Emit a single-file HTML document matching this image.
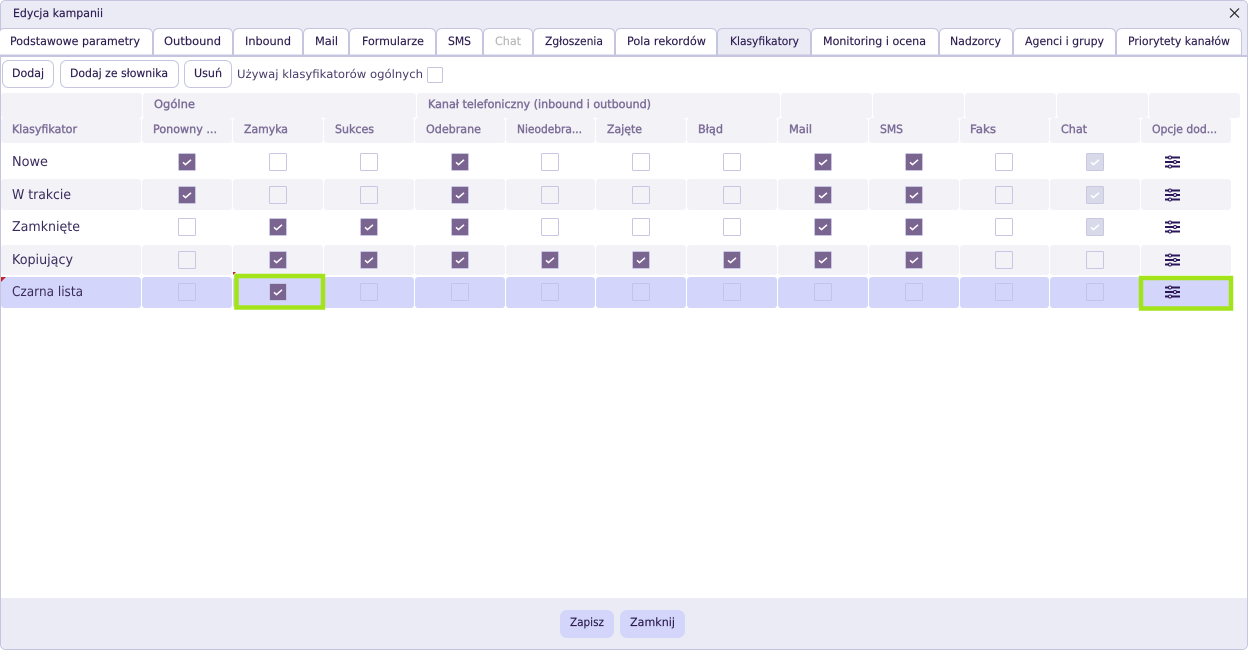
<!DOCTYPE html>
<html lang="pl">
<head>
<meta charset="utf-8">
<title>Edycja kampanii</title>
<style>
html,body{margin:0;padding:0;background:#fff;width:1250px;height:650px;overflow:hidden}
svg{display:block}
text{font-family:"DejaVu Sans","Liberation Sans",sans-serif;white-space:pre}
.t{font-size:11.5px;fill:#2a1a4e;stroke:#2a1a4e;stroke-width:.15}
.h{font-size:11.5px;fill:#7c6c97;stroke:#7c6c97;stroke-width:.4}
.l{font-size:13.5px;fill:#3a2a5c}
.cell{fill:#f2f2f7}
.blue{fill:#d3d6fa}
</style>
</head>
<body>
<svg width="1250" height="650" viewBox="0 0 1250 650" xmlns="http://www.w3.org/2000/svg" text-rendering="geometricPrecision">
<defs>
<g id="x"><rect x="-8.5" y="-8.5" width="17" height="17" rx="1" fill="#7a6490" stroke="#c8c6e2"/><path d="M-4 .3L-1.500 2.600L4 -2.200" fill="none" stroke="#fff" stroke-width="1.500"/></g>
<g id="o"><rect x="-8.5" y="-8.5" width="17" height="17" rx="1" fill="#fff" stroke="#c8c6e2"/></g>
<g id="f"><rect x="-8.5" y="-8.5" width="17" height="17" rx="1" fill="none" stroke="#c8c6e2"/></g>
<g id="b"><rect x="-8.5" y="-8.5" width="17" height="17" rx="1" fill="none" stroke="#c3c5e4"/></g>
<g id="d"><rect x="-8.5" y="-8.5" width="17" height="17" rx="1" fill="#d9dae9" stroke="#c8c9e0"/><path d="M-4 .3L-1.500 2.600L4 -2.200" fill="none" stroke="#fff" stroke-width="1.500"/></g>
<g id="i" fill="none" stroke="#2a1658">
<path d="M-7.500 -4.500H7.500M-7.500 0H7.500M-7.500 4.500H7.500" stroke-width="1.900"/>
<circle cx="-2.500" cy="-4.500" r="1.500" fill="#fff" stroke-width="1.100"/>
<circle cx="2.500" cy="0" r="1.500" fill="#fff" stroke-width="1.100"/>
<circle cx="-2.500" cy="4.500" r="1.500" fill="#fff" stroke-width="1.100"/>
</g>
</defs>

<!-- window -->
<rect x=".5" y=".5" width="1247" height="649" rx="5" fill="#fff" stroke="#c5c5e0"/>
<path d="M1 56V6Q1 1 6 1H1242Q1247 1 1247 6V56Z" fill="#ebebf6"/>
<rect x="0" y="55" width="1248" height="2" fill="#c5c5e0"/>
<path d="M1 598H1247V644Q1247 649 1242 649H6Q1 649 1 644Z" fill="#ebebf6"/>
<text x="13" y="17" class="t" textLength="90" lengthAdjust="spacingAndGlyphs">Edycja kampanii</text>
<path d="M1230 8.500L1239 17.500M1239 8.500L1230 17.500" stroke="#222" stroke-width="1.200" fill="none"/>

<!-- tabs -->
<g fill="#fff" stroke="#c5c5e0">
<path d="M-1 55V34Q-1 28.500 5 28.500H146Q152.500 28.500 152.500 34V55Z"/>
<path d="M153.500 55V34Q153.500 28.500 159 28.500H227Q232.500 28.500 232.500 34V55Z"/>
<path d="M233.500 55V34Q233.500 28.500 239 28.500H297Q302.500 28.500 302.500 34V55Z"/>
<path d="M303.500 55V34Q303.500 28.500 309 28.500H343Q348.500 28.500 348.500 34V55Z"/>
<path d="M349.500 55V34Q349.500 28.500 355 28.500H430Q435.500 28.500 435.500 34V55Z"/>
<path d="M436.500 55V34Q436.500 28.500 442 28.500H477Q482.500 28.500 482.500 34V55Z"/>
<path d="M483.500 55V34Q483.500 28.500 489 28.500H527Q532.500 28.500 532.500 34V55Z"/>
<path d="M533.500 55V34Q533.500 28.500 539 28.500H609Q614.500 28.500 614.500 34V55Z"/>
<path d="M615.500 55V34Q615.500 28.500 621 28.500H711Q716.500 28.500 716.500 34V55Z"/>
<path d="M717.500 55V34Q717.500 28.500 723 28.500H805Q810.500 28.500 810.500 34V55Z" fill="#ebebf6"/>
<path d="M811.500 55V34Q811.500 28.500 817 28.500H933Q938.500 28.500 938.500 34V55Z"/>
<path d="M939.500 55V34Q939.500 28.500 945 28.500H1007Q1012.500 28.500 1012.500 34V55Z"/>
<path d="M1013.500 55V34Q1013.500 28.500 1019 28.500H1110Q1115.500 28.500 1115.500 34V55Z"/>
<path d="M1116.500 55V34Q1116.500 28.500 1122 28.500H1236Q1241.500 28.500 1241.500 34V55Z"/>
</g>
<text x="10" y="45" class="t" textLength="130" lengthAdjust="spacingAndGlyphs">Podstawowe parametry</text>
<text x="164" y="45" class="t" textLength="57" lengthAdjust="spacingAndGlyphs">Outbound</text>
<text x="245" y="45" class="t" textLength="46" lengthAdjust="spacingAndGlyphs">Inbound</text>
<text x="315" y="45" class="t" textLength="23" lengthAdjust="spacingAndGlyphs">Mail</text>
<text x="362" y="45" class="t" textLength="62" lengthAdjust="spacingAndGlyphs">Formularze</text>
<text x="448" y="45" class="t" textLength="23" lengthAdjust="spacingAndGlyphs">SMS</text>
<text x="495" y="45" class="t" style="fill:#b5b5b5;stroke:#b5b5b5" textLength="26" lengthAdjust="spacingAndGlyphs">Chat</text>
<text x="545" y="45" class="t" textLength="58" lengthAdjust="spacingAndGlyphs">Zgłoszenia</text>
<text x="627" y="45" class="t" textLength="79" lengthAdjust="spacingAndGlyphs">Pola rekordów</text>
<text x="730" y="45" class="t" textLength="69" lengthAdjust="spacingAndGlyphs">Klasyfikatory</text>
<text x="823" y="45" class="t" textLength="103" lengthAdjust="spacingAndGlyphs">Monitoring i ocena</text>
<text x="950" y="45" class="t" textLength="51" lengthAdjust="spacingAndGlyphs">Nadzorcy</text>
<text x="1025" y="45" class="t" textLength="79" lengthAdjust="spacingAndGlyphs">Agenci i grupy</text>
<text x="1128" y="45" class="t" textLength="102" lengthAdjust="spacingAndGlyphs">Priorytety kanałów</text>

<!-- toolbar -->
<g fill="#fff" stroke="#c5c5e0">
<rect x="2.500" y="60.500" width="51" height="27" rx="6"/>
<rect x="60.500" y="60.500" width="118" height="27" rx="6"/>
<rect x="184.500" y="60.500" width="47" height="27" rx="6"/>
<rect x="427.500" y="67.500" width="15" height="15" rx="1.500"/>
</g>
<text x="12" y="77" class="t" textLength="32" lengthAdjust="spacingAndGlyphs">Dodaj</text>
<text x="70" y="77" class="t" textLength="98" lengthAdjust="spacingAndGlyphs">Dodaj ze słownika</text>
<text x="194" y="77" class="t" textLength="28" lengthAdjust="spacingAndGlyphs">Usuń</text>
<text x="237" y="78" class="t" style="fill:#4a3b68;stroke:none" textLength="186" lengthAdjust="spacingAndGlyphs">Używaj klasyfikatorów ogólnych</text>

<!-- table header group row -->
<g class="cell">
<rect x="1" y="93" width="141" height="25" rx="3"/>
<rect x="143" y="93" width="273" height="25" rx="3"/>
<rect x="417" y="93" width="363" height="25" rx="3"/>
<rect x="781" y="93" width="91" height="25" rx="3"/>
<rect x="873" y="93" width="91" height="25" rx="3"/>
<rect x="965" y="93" width="91" height="25" rx="3"/>
<rect x="1057" y="93" width="91" height="25" rx="3"/>
<rect x="1149" y="93" width="91" height="25" rx="3"/>
</g>
<!-- table header row -->
<g class="cell">
<rect x="1" y="118" width="140" height="25" rx="3"/>
<rect x="142" y="118" width="90" height="25" rx="3"/>
<rect x="233" y="118" width="90" height="25" rx="3"/>
<rect x="324" y="118" width="90" height="25" rx="3"/>
<rect x="415" y="118" width="90" height="25" rx="3"/>
<rect x="506" y="118" width="89" height="25" rx="3"/>
<rect x="596" y="118" width="90" height="25" rx="3"/>
<rect x="687" y="118" width="90" height="25" rx="3"/>
<rect x="778" y="118" width="90" height="25" rx="3"/>
<rect x="869" y="118" width="90" height="25" rx="3"/>
<rect x="960" y="118" width="89" height="25" rx="3"/>
<rect x="1050" y="118" width="90" height="25" rx="3"/>
<rect x="1141" y="118" width="90" height="25" rx="3"/>
</g>
<text x="154" y="108" class="h" textLength="41" lengthAdjust="spacingAndGlyphs">Ogólne</text>
<text x="428" y="108" class="h" textLength="223" lengthAdjust="spacingAndGlyphs">Kanał telefoniczny (inbound i outbound)</text>
<text x="12" y="133" class="h" textLength="65" lengthAdjust="spacingAndGlyphs">Klasyfikator</text>
<text x="153" y="133" class="h" textLength="64" lengthAdjust="spacingAndGlyphs">Ponowny ...</text>
<text x="244" y="133" class="h" textLength="44" lengthAdjust="spacingAndGlyphs">Zamyka</text>
<text x="335" y="133" class="h" textLength="39" lengthAdjust="spacingAndGlyphs">Sukces</text>
<text x="426" y="133" class="h" textLength="55" lengthAdjust="spacingAndGlyphs">Odebrane</text>
<text x="517" y="133" class="h" textLength="65" lengthAdjust="spacingAndGlyphs">Nieodebra...</text>
<text x="607" y="133" class="h" textLength="35" lengthAdjust="spacingAndGlyphs">Zajęte</text>
<text x="698" y="133" class="h" textLength="25" lengthAdjust="spacingAndGlyphs">Błąd</text>
<text x="789" y="133" class="h" textLength="23" lengthAdjust="spacingAndGlyphs">Mail</text>
<text x="880" y="133" class="h" textLength="23" lengthAdjust="spacingAndGlyphs">SMS</text>
<text x="970" y="133" class="h" textLength="26" lengthAdjust="spacingAndGlyphs">Faks</text>
<text x="1061" y="133" class="h" textLength="26" lengthAdjust="spacingAndGlyphs">Chat</text>
<text x="1152" y="133" class="h" textLength="65" lengthAdjust="spacingAndGlyphs">Opcje dod...</text>

<!-- row backgrounds -->
<g class="cell">
<rect x="1" y="179" width="140" height="31" rx="3"/><rect x="142" y="179" width="90" height="31" rx="3"/><rect x="233" y="179" width="90" height="31" rx="3"/><rect x="324" y="179" width="90" height="31" rx="3"/><rect x="415" y="179" width="90" height="31" rx="3"/><rect x="506" y="179" width="89" height="31" rx="3"/><rect x="596" y="179" width="90" height="31" rx="3"/><rect x="687" y="179" width="90" height="31" rx="3"/><rect x="778" y="179" width="90" height="31" rx="3"/><rect x="869" y="179" width="90" height="31" rx="3"/><rect x="960" y="179" width="89" height="31" rx="3"/><rect x="1050" y="179" width="90" height="31" rx="3"/><rect x="1141" y="179" width="90" height="31" rx="3"/>
<rect x="1" y="245" width="140" height="30" rx="3"/><rect x="142" y="245" width="90" height="30" rx="3"/><rect x="233" y="245" width="90" height="30" rx="3"/><rect x="324" y="245" width="90" height="30" rx="3"/><rect x="415" y="245" width="90" height="30" rx="3"/><rect x="506" y="245" width="89" height="30" rx="3"/><rect x="596" y="245" width="90" height="30" rx="3"/><rect x="687" y="245" width="90" height="30" rx="3"/><rect x="778" y="245" width="90" height="30" rx="3"/><rect x="869" y="245" width="90" height="30" rx="3"/><rect x="960" y="245" width="89" height="30" rx="3"/><rect x="1050" y="245" width="90" height="30" rx="3"/><rect x="1141" y="245" width="90" height="30" rx="3"/>
</g>
<g class="blue">
<rect x="1" y="277" width="140" height="31" rx="3"/><rect x="142" y="277" width="90" height="31" rx="3"/><rect x="233" y="277" width="90" height="31" rx="3"/><rect x="324" y="277" width="90" height="31" rx="3"/><rect x="415" y="277" width="90" height="31" rx="3"/><rect x="506" y="277" width="89" height="31" rx="3"/><rect x="596" y="277" width="90" height="31" rx="3"/><rect x="687" y="277" width="90" height="31" rx="3"/><rect x="778" y="277" width="90" height="31" rx="3"/><rect x="869" y="277" width="90" height="31" rx="3"/><rect x="960" y="277" width="89" height="31" rx="3"/><rect x="1050" y="277" width="90" height="31" rx="3"/><rect x="1141" y="277" width="90" height="31" rx="3"/>
</g>
<path d="M1 277H6L1 282Z" fill="#c0222c"/>
<path d="M233 272H236L233 275Z" fill="#c0222c"/>

<!-- row labels -->
<text x="12" y="166" class="l" textLength="36" lengthAdjust="spacingAndGlyphs">Nowe</text>
<text x="12" y="199" class="l" textLength="59" lengthAdjust="spacingAndGlyphs">W trakcie</text>
<text x="12" y="231" class="l" textLength="68" lengthAdjust="spacingAndGlyphs">Zamknięte</text>
<text x="12" y="264" class="l" textLength="61" lengthAdjust="spacingAndGlyphs">Kopiujący</text>
<text x="12" y="296" class="l" textLength="71" lengthAdjust="spacingAndGlyphs">Czarna lista</text>

<!-- row 1 -->
<use href="#x" x="187" y="162"/><use href="#o" x="278" y="162"/><use href="#o" x="369" y="162"/><use href="#x" x="460" y="162"/><use href="#o" x="550" y="162"/><use href="#o" x="641" y="162"/><use href="#o" x="732" y="162"/><use href="#x" x="823" y="162"/><use href="#x" x="914" y="162"/><use href="#o" x="1004" y="162"/><use href="#d" x="1095" y="162"/><use href="#i" x="1172.500" y="162"/>
<!-- row 2 -->
<use href="#x" x="187" y="195"/><use href="#f" x="278" y="195"/><use href="#f" x="369" y="195"/><use href="#x" x="460" y="195"/><use href="#f" x="550" y="195"/><use href="#f" x="641" y="195"/><use href="#f" x="732" y="195"/><use href="#x" x="823" y="195"/><use href="#x" x="914" y="195"/><use href="#f" x="1004" y="195"/><use href="#d" x="1095" y="195"/><use href="#i" x="1172.500" y="195"/>
<!-- row 3 -->
<use href="#o" x="187" y="227"/><use href="#x" x="278" y="227"/><use href="#x" x="369" y="227"/><use href="#x" x="460" y="227"/><use href="#o" x="550" y="227"/><use href="#o" x="641" y="227"/><use href="#o" x="732" y="227"/><use href="#x" x="823" y="227"/><use href="#x" x="914" y="227"/><use href="#o" x="1004" y="227"/><use href="#d" x="1095" y="227"/><use href="#i" x="1172.500" y="227"/>
<!-- row 4 -->
<use href="#f" x="187" y="260"/><use href="#x" x="278" y="260"/><use href="#x" x="369" y="260"/><use href="#x" x="460" y="260"/><use href="#x" x="550" y="260"/><use href="#x" x="641" y="260"/><use href="#x" x="732" y="260"/><use href="#x" x="823" y="260"/><use href="#x" x="914" y="260"/><use href="#f" x="1004" y="260"/><use href="#f" x="1095" y="260"/><use href="#i" x="1172.500" y="260"/>
<!-- row 5 -->
<use href="#b" x="187" y="292"/><use href="#x" x="278" y="292"/><use href="#b" x="369" y="292"/><use href="#b" x="460" y="292"/><use href="#b" x="550" y="292"/><use href="#b" x="641" y="292"/><use href="#b" x="732" y="292"/><use href="#b" x="823" y="292"/><use href="#b" x="914" y="292"/><use href="#b" x="1004" y="292"/><use href="#b" x="1095" y="292"/><use href="#i" x="1172.500" y="292"/>

<!-- highlight frames -->
<g fill="none" stroke="#a2e31a">
<rect x="236.500" y="276" width="86.500" height="31.500" stroke-width="4.500"/>
<rect x="1141" y="278" width="90" height="30.500" stroke-width="4.500"/>
</g>

<!-- footer -->
<rect x="560" y="610" width="54" height="28" rx="7" fill="#d3d6fa"/>
<rect x="620" y="610" width="65" height="28" rx="7" fill="#d3d6fa"/>
<text x="570" y="626" class="t" textLength="34" lengthAdjust="spacingAndGlyphs">Zapisz</text>
<text x="630" y="626" class="t" textLength="45" lengthAdjust="spacingAndGlyphs">Zamknij</text>
</svg>
</body>
</html>
